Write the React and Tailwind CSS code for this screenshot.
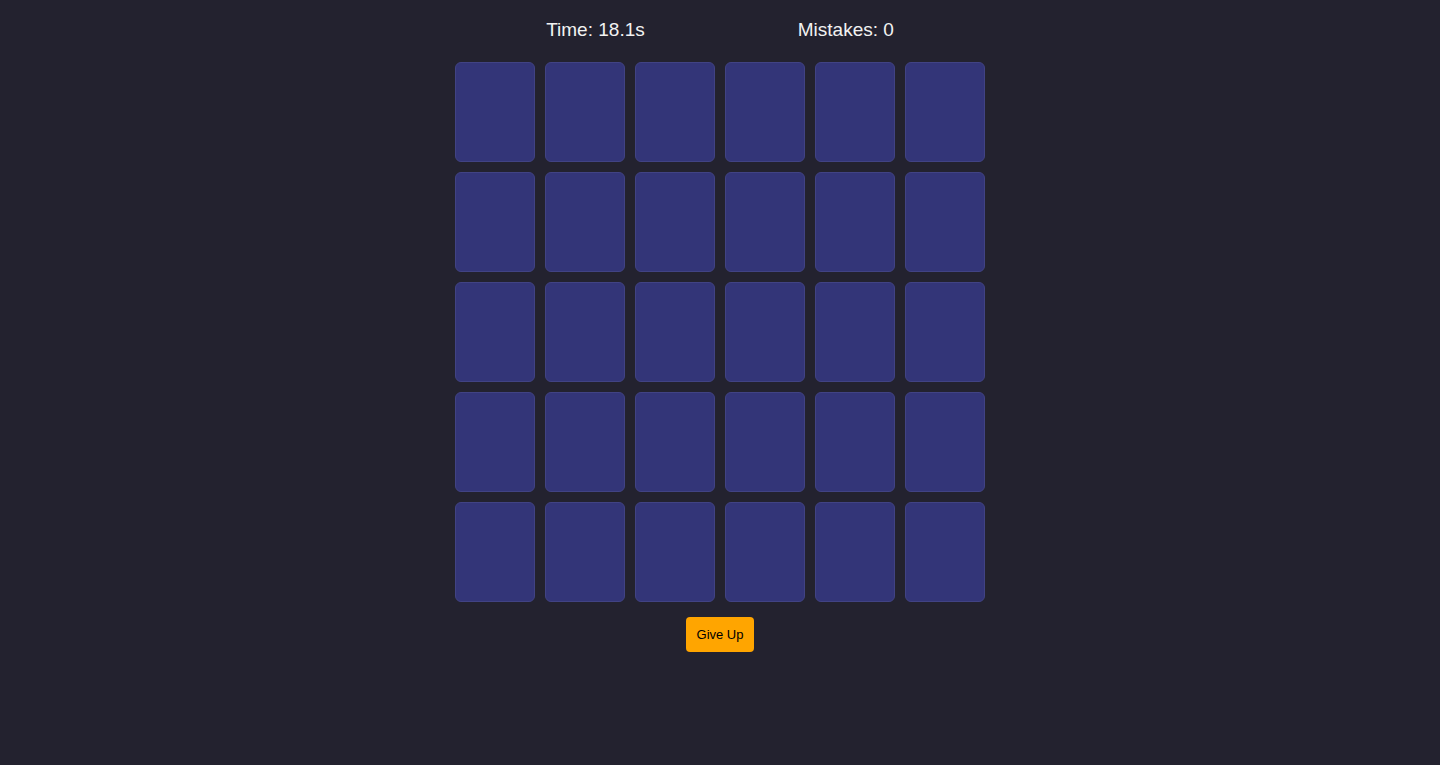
import React from 'react';

export default function App() {
  const cards = Array.from({ length: 30 });

  return (
    <div className="min-h-[765px] w-full bg-[#23222f] flex flex-col items-center pt-[19px] font-['Liberation_Sans',Arial,sans-serif]">
      {/* Stats */}
      <div className="flex justify-center gap-[153px] text-[19px] leading-[22px] text-[#f2f2f2]">
        <span>Time: 18.1s</span>
        <span>Mistakes: 0</span>
      </div>

      {/* Board */}
      <div className="grid grid-cols-[repeat(6,80px)] gap-[10px] mt-[21px]">
        {cards.map((_, i) => (
          <div
            key={i}
            className="w-[80px] h-[100px] rounded-[6px] bg-[#333578] border border-[#414384]"
          />
        ))}
      </div>

      <button className="mt-[15px] w-[68px] h-[35px] rounded-[4px] bg-[#ffa500] text-[13px] text-black">
        Give Up
      </button>
    </div>
  );
}
